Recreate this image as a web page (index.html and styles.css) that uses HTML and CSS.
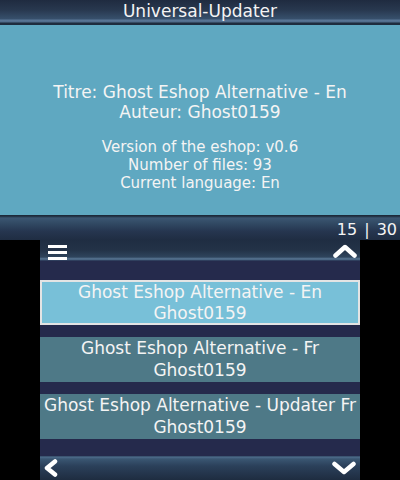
FILE: index.html
```html
<!DOCTYPE html>
<html>
<head>
<meta charset="utf-8">
<link rel="stylesheet" href="styles.css">
</head>
<body>
<div class="top">
  <div class="bar top-head">Universal-Updater</div>
  <div class="info">
    <div class="main">
      <div>Titre: Ghost Eshop Alternative - En</div>
      <div>Auteur: Ghost0159</div>
    </div>
    <div class="meta">
      <div>Version of the eshop: v0.6</div>
      <div>Number of files: 93</div>
      <div>Current language: En</div>
    </div>
  </div>
  <div class="bar top-foot"><span class="count">15 | 30</span></div>
</div>
<div class="bottom">
  <div class="bar bot-head">
    <svg class="burger" width="19" height="15" viewBox="0 0 19 15"><rect x="0" y="0" width="19" height="3" fill="#fff"/><rect x="0" y="6" width="19" height="3" fill="#fff"/><rect x="0" y="12" width="19" height="3" fill="#fff"/></svg>
    <svg class="chev" width="24" height="14" viewBox="0 0 24 14"><path d="M2.5 11.5 L12 3 L21.5 11.5" fill="none" stroke="#fff" stroke-width="4.5" stroke-linecap="round" stroke-linejoin="round"/></svg>
  </div>
  <div class="list">
    <div class="item sel"><div>Ghost Eshop Alternative - En</div><div>Ghost0159</div></div>
    <div class="item"><div>Ghost Eshop Alternative - Fr</div><div>Ghost0159</div></div>
    <div class="item"><div>Ghost Eshop Alternative - Updater Fr</div><div>Ghost0159</div></div>
  </div>
  <div class="bar bot-foot">
    <svg class="left" width="16" height="18" viewBox="0 0 16 18"><path d="M12 2.5 L4 9 L12 15.5" fill="none" stroke="#fff" stroke-width="4.5" stroke-linecap="round" stroke-linejoin="round"/></svg>
    <svg class="down" width="24" height="14" viewBox="0 0 24 14"><path d="M2.5 3 L12 11 L21.5 3" fill="none" stroke="#fff" stroke-width="4.5" stroke-linecap="round" stroke-linejoin="round"/></svg>
  </div>
</div>
</body>
</html>
```
FILE: styles.css
```css
html, body {
  margin: 0;
  padding: 0;
  background: #000;
}
body {
  width: 400px;
  height: 480px;
  font-family: "DejaVu Sans", "Noto Sans", sans-serif;
  color: #f4f4f4;
}
.top {
  width: 400px;
  height: 240px;
  display: flex;
  flex-direction: column;
}
.top-head {
  height: 25px;
  box-sizing: border-box;
  text-align: center;
  font-size: 17px;
  line-height: 22px;
  background: linear-gradient(to bottom, #1f2b40 0px, #28384f 10px, #37506c 19px, #5a7696 20px, #4f6b8a 22px, #1e2c3e 23px, #1e2c3e 25px);
}
.info {
  height: 190px;
  background: #5fa8c1;
  display: flex;
  flex-direction: column;
  align-items: center;
  text-align: center;
  white-space: nowrap;
}
.main {
  margin-top: 57px;
  font-size: 17px;
  line-height: 20px;
}
.meta {
  margin-top: 16px;
  font-size: 15px;
  line-height: 18px;
}
.top-foot {
  height: 25px;
  display: flex;
  justify-content: flex-end;
  align-items: flex-end;
  background: linear-gradient(to bottom, #1d2a3b 0px, #1d2a3b 1px, #3b5672 3px, #324a64 8px, #263650 16px, #1f2d42 25px);
}
.count {
  font-size: 16px;
  line-height: 20px;
  padding-right: 3px;
  padding-bottom: 0px;
  word-spacing: 2px;
}
.bottom {
  width: 320px;
  height: 240px;
  margin: 0 auto;
  display: flex;
  flex-direction: column;
  background: #252a4c;
}
.bot-head {
  height: 21px;
  display: flex;
  justify-content: space-between;
  align-items: flex-start;
  padding: 0 3px 0 8px;
  background: linear-gradient(to bottom, #1f2d42 0px, #233247 10px, #2e445c 17px, #5c7a98 19px, #3a5470 20px, #252a4c 21px);
}
.burger { margin-top: 5px; }
.chev { margin-top: 4px; }
.list {
  flex: 1;
  display: flex;
  flex-direction: column;
  gap: 12px;
  padding-top: 19px;
}
.item {
  height: 45px;
  box-sizing: border-box;
  background: #4e7987;
  text-align: center;
  font-size: 17px;
  line-height: 22px;
  white-space: nowrap;
}
.item.sel {
  background: #78c0d8;
  border: 2px solid #e4e4e4;
  line-height: 21px;
}
.bot-foot {
  height: 24px;
  display: flex;
  justify-content: space-between;
  align-items: flex-start;
  padding: 0 4px 0 3px;
  background: linear-gradient(to bottom, #2a3e58 0px, #4e6c8c 1px, #3a5672 3px, #2b405a 10px, #1e2c40 24px);
}
.left { margin-top: 3px; }
.down { margin-top: 5px; }
.bar { flex-shrink: 0; }
```
